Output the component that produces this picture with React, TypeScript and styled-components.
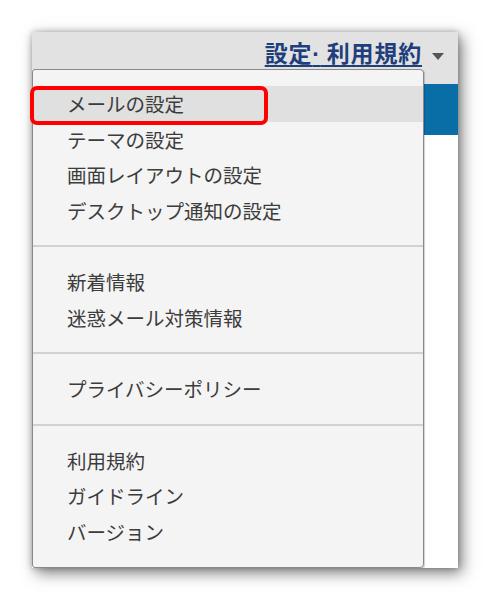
import React from "react";
import styled, { createGlobalStyle } from "styled-components";

const GlobalStyle = createGlobalStyle`
  html, body { margin: 0; padding: 0; background: #ffffff; }
  body { font-family: "Noto Sans CJK JP", "Noto Sans", sans-serif; }
`;

const Page = styled.div`
  position: relative;
  width: 490px;
  height: 601px;
  padding: 32px 0 0 32px;
  box-sizing: border-box;
`;

const Frame = styled.div`
  position: relative;
  width: 426px;
  height: 536px;
  background: #ffffff;
  overflow: hidden;
  box-shadow: 4px 5px 14px rgba(0, 0, 0, 0.5), 0 0 6px rgba(0, 0, 0, 0.25);
`;

const Header = styled.div`
  height: 52px;
  background: #e2e2e2;
`;

const HeaderLine = styled.div`
  height: 42px;
  display: flex;
  align-items: center;
  justify-content: flex-end;
  gap: 10px;
  padding-right: 14px;
`;

const HeaderLink = styled.a`
  font-family: "Noto Sans CJK JP", sans-serif;
  font-size: 23px;
  font-weight: 700;
  color: #1f3e7c;
  text-decoration: underline;
  text-decoration-thickness: 2px;
  text-underline-offset: 3px;
  letter-spacing: 0.8px;
  line-height: 1;
  white-space: pre;
`;

const Dot = styled.span`
  font-family: "Liberation Sans", sans-serif;
  font-weight: 700;
`;

const Caret = styled.span`
  width: 0;
  height: 0;
  margin-top: 6px;
  border-left: 6px solid transparent;
  border-right: 6px solid transparent;
  border-top: 7px solid #555555;
`;

const BlueBar = styled.div`
  height: 51px;
  background: #0a6ea6;
`;

const Menu = styled.div`
  position: absolute;
  left: 0;
  top: 37px;
  width: 392px;
  height: 499px;
  box-sizing: border-box;
  background: #f4f4f4;
  border: 1px solid #8a8a8a;
  border-radius: 3px 4px 4px 3px;
  box-shadow: 1px 1px 1px rgba(0, 0, 0, 0.18);
`;

const Group = styled.div`
  padding: 17px 0;
  &:first-child {
    padding-top: 16px;
  }
`;

const Divider = styled.div`
  height: 2px;
  background: #d2d2d2;
`;

const Item = styled.div<{ $active?: boolean }>`
  height: 35.5px;
  display: flex;
  align-items: center;
  padding-left: 34px;
  font-size: 19.5px;
  color: #3c3c3c;
  background: ${(p) => (p.$active ? "#e0e0e0" : "transparent")};
  white-space: nowrap;
`;

const Annotation = styled.div`
  position: absolute;
  left: 30px;
  top: 86px;
  width: 238px;
  height: 39px;
  box-sizing: border-box;
  border: 4px solid #ff0000;
  border-radius: 7px;
`;

const groups: { label: string; active?: boolean }[][] = [
  [
    { label: "メールの設定", active: true },
    { label: "テーマの設定" },
    { label: "画面レイアウトの設定" },
    { label: "デスクトップ通知の設定" },
  ],
  [{ label: "新着情報" }, { label: "迷惑メール対策情報" }],
  [{ label: "プライバシーポリシー" }],
  [{ label: "利用規約" }, { label: "ガイドライン" }, { label: "バージョン" }],
];

export default function App() {
  return (
    <>
      <GlobalStyle />
      <Page>
        <Frame>
          <Header>
            <HeaderLine>
              <HeaderLink>
                設定<Dot>·</Dot> 利用規約
              </HeaderLink>
              <Caret />
            </HeaderLine>
          </Header>
          <BlueBar />
          <Menu>
            {groups.map((g, gi) => (
              <React.Fragment key={gi}>
                {gi > 0 && <Divider />}
                <Group>
                  {g.map((it) => (
                    <Item key={it.label} $active={it.active}>
                      {it.label}
                    </Item>
                  ))}
                </Group>
              </React.Fragment>
            ))}
          </Menu>
        </Frame>
        <Annotation />
      </Page>
    </>
  );
}
